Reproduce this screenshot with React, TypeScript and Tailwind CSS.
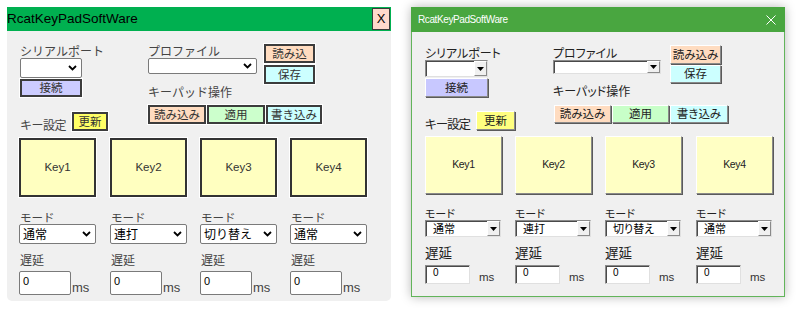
import React from "react";

const modes = ["通常", "連打", "切り替え", "通常"];

function LChevron() {
  return (
    <svg width="9" height="6" viewBox="0 0 9 6" className="shrink-0">
      <polyline points="1,1 4.5,4.5 8,1" fill="none" stroke="#000" strokeWidth="1.8" />
    </svg>
  );
}

function LSelect({ w, h, text }: { w: string; h: string; text?: string }) {
  return (
    <div className={`${w} ${h} bg-white border border-[#7a7a7a] rounded-[2px] flex items-center justify-between pl-[3px] pr-[4px]`}>
      <span className="text-[12px] leading-none text-black whitespace-nowrap">{text ?? ""}</span>
      <LChevron />
    </div>
  );
}

function LBtn({ cls, children }: { cls: string; children: React.ReactNode }) {
  return (
    <div className={`${cls} border-2 border-[#3c3c3c] shadow-[0_0_0_1px_#ffffff] flex items-center justify-center text-[11.5px] leading-none text-[#333] whitespace-nowrap`}>
      {children}
    </div>
  );
}

function LeftWindow() {
  return (
    <div className="w-[384px] flex flex-col shrink-0">
      <div className="h-[24px] bg-[#00b050] flex items-center justify-between">
        <span className="font-['Liberation_Sans',sans-serif] text-[13.5px] leading-none text-black">RcatKeyPadSoftWare</span>
        <div className="mr-[1px] w-[18px] h-[22px] bg-[#ffd9cc] border border-[#3a3a3a] flex items-center justify-center font-['Liberation_Sans',sans-serif] text-[13px] text-black">X</div>
      </div>
      <div className="h-[270px] bg-[#f0f0f0] rounded-b-[5px] pl-[13px] pt-[13px]">
        <div className="flex">
          <div className="w-[88px] shrink-0 flex flex-col">
            <div className="h-[14px] text-[12px] leading-[14px] text-[#444] whitespace-nowrap">シリアルポート</div>
            <LSelect w="w-[62px]" h="h-[20px]" />
            <div className="mt-[1px]">
              <LBtn cls="w-[62px] h-[18px] bg-[#ccccff]">接続</LBtn>
            </div>
            <div className="mt-[15px] flex items-end">
              <div className="w-[52px] shrink-0 whitespace-nowrap text-[12px] tracking-[-0.5px] leading-[14px] text-[#444] mb-[-1px]">キー設定</div>
              <div className="shrink-0">
                <LBtn cls="w-[36px] h-[19px] bg-[#ffff66]">更新</LBtn>
              </div>
            </div>
          </div>
          <div className="ml-[40px] flex flex-col">
            <div className="flex">
              <div className="flex flex-col">
                <div className="h-[14px] text-[12px] leading-[14px] text-[#444] whitespace-nowrap">プロファイル</div>
                <LSelect w="w-[109px]" h="h-[16px]" />
              </div>
              <div className="ml-[7px] flex flex-col">
                <LBtn cls="w-[51px] h-[19px] bg-[#ffdcc0]">読み込</LBtn>
                <div className="mt-[2px]">
                  <LBtn cls="w-[51px] h-[19px] bg-[#ccffff]">保存</LBtn>
                </div>
              </div>
            </div>
            <div className="h-[16px] text-[12px] leading-[16px] text-[#444] whitespace-nowrap">キーパッド操作</div>
            <div className="mt-[5px] flex gap-[1px]">
              <LBtn cls="w-[58px] h-[19px] bg-[#ffdcc0]">読み込み</LBtn>
              <LBtn cls="w-[58px] h-[19px] bg-[#ccffcc]">適用</LBtn>
              <LBtn cls="w-[56px] h-[19px] bg-[#ccffff]">書き込み</LBtn>
            </div>
          </div>
        </div>
        <div className="mt-[7px] -ml-[1px] grid grid-cols-[91px_90px_90px_90px]">
          {modes.map((m, i) => (
            <div key={i} className="flex flex-col">
              <div className="w-[77px] h-[59px] bg-[#ffffc0] border-2 border-[#333] shadow-[0_0_0_1px_#ffffff] flex items-center justify-center font-['Liberation_Sans',sans-serif] text-[11.5px] text-[#333]">
                Key{i + 1}
              </div>
              <div className="mt-[13px] h-[14px] text-[11.5px] leading-[14px] text-[#444] pl-[1px]">モード</div>
              <LSelect w="w-[77px]" h="h-[20px]" text={m} />
              <div className="mt-[9px] h-[14px] text-[12px] leading-[14px] text-[#444] pl-[1px]">遅延</div>
              <div className="mt-[4px] flex items-end">
                <div className="w-[52px] h-[24px] bg-white border border-[#7a7a7a] rounded-[2px] pl-[3px] pt-[2px] font-['Liberation_Sans',sans-serif] text-[11px] leading-[14px] text-black">0</div>
                <span className="ml-[1px] font-['Liberation_Sans',sans-serif] text-[13px] leading-none text-[#444] mb-[1px]">ms</span>
              </div>
            </div>
          ))}
        </div>
      </div>
    </div>
  );
}

function RBtn({ cls, children }: { cls: string; children: React.ReactNode }) {
  return (
    <div className={`${cls} border border-t-white border-l-white border-b-[#8a8a8a] border-r-[#8a8a8a] shadow-[1px_1px_0_#5a5a5a] flex items-center justify-center text-[11.5px] leading-none text-[#222] whitespace-nowrap [font-feature-settings:'palt']`}>
      {children}
    </div>
  );
}

function RSelect({ w, h, text }: { w: string; h: string; text?: string }) {
  return (
    <div className={`${w} ${h} bg-white border border-t-[#8a8a8a] border-l-[#8a8a8a] border-b-[#e0e0e0] border-r-[#e0e0e0] shadow-[inset_1px_1px_0_#4a4a4a] flex items-stretch justify-between pl-[7px]`}>
      <span className="self-center text-[11px] leading-none text-black whitespace-nowrap [font-feature-settings:'palt']">{text ?? ""}</span>
      <div className="w-[13px] bg-[#f0f0f0] border border-t-white border-l-white border-b-[#8a8a8a] border-r-[#8a8a8a] flex items-center justify-center">
        <svg width="7" height="4" viewBox="0 0 7 4">
          <polygon points="0,0 7,0 3.5,4" fill="#000" />
        </svg>
      </div>
    </div>
  );
}

function RightWindow() {
  return (
    <div className="ml-[20px] w-[374px] flex flex-col shrink-0 shadow-[0_0_10px_rgba(0,0,0,0.28)]">
      <div className="h-[25px] bg-[#49a640] flex items-center justify-between pl-[7px] pr-[9px]">
        <span className="font-['Liberation_Sans',sans-serif] text-[10px] tracking-[-0.4px] leading-none text-white">RcatKeyPadSoftWare</span>
        <svg width="10" height="10" viewBox="0 0 10 10">
          <line x1="0.5" y1="0.5" x2="9.5" y2="9.5" stroke="#fff" strokeWidth="1" />
          <line x1="9.5" y1="0.5" x2="0.5" y2="9.5" stroke="#fff" strokeWidth="1" />
        </svg>
      </div>
      <div className="h-[265px] bg-[#f0f0f0] border border-t-0 border-[#62b45a] pl-[13px] pt-[13px] [font-feature-settings:'palt']">
        <div className="flex">
          <div className="w-[90px] shrink-0 flex flex-col">
            <div className="h-[15px] text-[12px] leading-[15px] text-[#222] whitespace-nowrap">シリアルポート</div>
            <RSelect w="w-[63px]" h="h-[17px]" />
            <div className="mt-[1px]">
              <RBtn cls="w-[63px] h-[19px] bg-[#c8c8ff]">接続</RBtn>
            </div>
            <div className="mt-[14px] flex items-end">
              <div className="w-[51px] shrink-0 whitespace-nowrap text-[12.5px] tracking-[-1px] leading-[14px] text-[#222] mb-[-1px]">キー設定</div>
              <div className="shrink-0">
                <RBtn cls="w-[39px] h-[19px] bg-[#ffff80]">更新</RBtn>
              </div>
            </div>
          </div>
          <div className="ml-[38px] flex flex-col">
            <div className="flex">
              <div className="flex flex-col">
                <div className="h-[15px] text-[12px] leading-[15px] text-[#222] whitespace-nowrap">プロファイル</div>
                <RSelect w="w-[108px]" h="h-[14px]" />
              </div>
              <div className="ml-[9px] flex flex-col">
                <RBtn cls="w-[51px] h-[19px] bg-[#ffdcc0]">読み込み</RBtn>
                <div className="mt-[1px]">
                  <RBtn cls="w-[51px] h-[18px] bg-[#ccffff]">保存</RBtn>
                </div>
              </div>
            </div>
            <div className="h-[16px] text-[12px] leading-[16px] text-[#222] whitespace-nowrap">キーパッド操作</div>
            <div className="mt-[6px] pl-[1px] flex gap-[1px]">
              <RBtn cls="w-[57px] h-[18px] bg-[#ffdcc0]">読み込み</RBtn>
              <RBtn cls="w-[57px] h-[18px] bg-[#c8ffc8]">適用</RBtn>
              <RBtn cls="w-[58px] h-[18px] bg-[#ccffff]">書き込み</RBtn>
            </div>
          </div>
        </div>
        <div className="mt-[6px] grid grid-cols-[90px_90px_91px_90px]">
          {modes.map((m, i) => (
            <div key={i} className="flex flex-col">
              <div className="w-[77px] h-[58px] bg-[#ffffc4] border border-t-white border-l-white border-b-[#8a8a8a] border-r-[#8a8a8a] shadow-[1px_1px_0_#5a5a5a] flex items-center justify-center font-['Liberation_Sans',sans-serif] text-[10.5px] tracking-[-0.3px] text-[#222]">
                Key{i + 1}
              </div>
              <div className="mt-[12px] h-[14px] text-[11px] leading-[14px] text-[#222]">モード</div>
              <RSelect w="w-[76px]" h="h-[17px]" text={m} />
              <div className="mt-[7px] h-[17px] text-[13.5px] leading-[17px] text-[#222]">遅延</div>
              <div className="mt-[4px] flex items-end">
                <div className="w-[45px] h-[19px] bg-white border border-t-[#8a8a8a] border-l-[#8a8a8a] border-b-[#e0e0e0] border-r-[#e0e0e0] shadow-[inset_1px_1px_0_#4a4a4a] pl-[7px] font-['Liberation_Sans',sans-serif] text-[10px] leading-[13px] text-black">0</div>
                <span className="ml-[9px] font-['Liberation_Sans',sans-serif] text-[11.5px] leading-none text-[#333] mb-[1px]">ms</span>
              </div>
            </div>
          ))}
        </div>
      </div>
    </div>
  );
}

export default function App() {
  return (
    <div className="w-[800px] h-[316px] bg-white pl-[7px] pt-[7px] flex items-start overflow-hidden font-['Noto_Sans_CJK_JP','Noto_Sans',sans-serif]">
      <LeftWindow />
      <RightWindow />
    </div>
  );
}
